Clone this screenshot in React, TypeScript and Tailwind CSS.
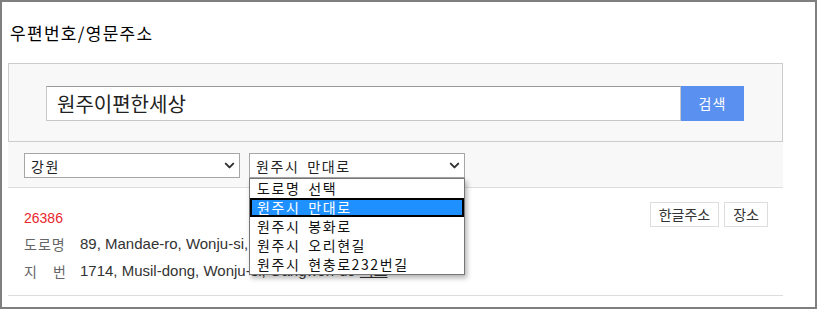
import { ChevronDown } from 'lucide-react';

const roads = ['도로명 선택', '원주시 만대로', '원주시 봉화로', '원주시 오리현길', '원주시 현충로232번길'];

const font = { fontFamily: '"Noto Sans CJK KR", "Liberation Sans", sans-serif' };
const latin = { fontFamily: '"Liberation Sans", "Noto Sans CJK KR", sans-serif' };

function FakeSelect({ value, width }: { value: string; width: string }) {
  return (
    <div className={`${width} h-[25px] border border-[#a6a6a6] bg-white flex items-center justify-between pl-[6px] pr-[2px] text-[14px] text-[#222]`}>
      <span className="leading-none tracking-[1.6px] [word-spacing:3px]">{value}</span>
      <ChevronDown size={15} strokeWidth={3.2} className="text-[#333]" />
    </div>
  );
}

export default function App() {
  return (
    <div
      className="relative w-[817px] h-[309px] border-2 border-[#7f7f7f] bg-white overflow-hidden"
      style={font}
    >
      <div className="ml-[6px] w-[775px]">
        <h1 className="pt-[20px] pl-[2px] h-[61px] text-[17px] leading-[22px] tracking-[1.3px] text-black">우편번호/영문주소</h1>

        <div className="h-[79px] border border-[#cccccc] bg-[#f8f8f8] pl-[37px] pt-[22px] flex items-start">
          <div className="w-[635px] h-[35px] bg-white border border-[#c8c8c8] border-t-[#999] flex items-center pl-[10px] text-[20px] text-[#222]">
            원주이편한세상
          </div>
          <button className="w-[63px] h-[35px] bg-[#5a91f0] text-white text-[14px] tracking-[1px]">검색</button>
        </div>

        <div className="h-[46px] bg-[#f8f8f8] border-b border-[#dddddd] pl-[16px] pt-[11px] flex gap-[9px]">
          <FakeSelect value="강원" width="w-[216px]" />
          <FakeSelect value="원주시 만대로" width="w-[216px]" />
        </div>

        <div className="h-[108px] border-b border-[#dddddd] pl-[16px] pr-[15px] pt-[14px]">
          <div className="flex items-start justify-between">
            <span className="mt-[8px] text-[14px] leading-[16px] text-[#e8262f]" style={latin}>26386</span>
            <div className="flex gap-[5px]">
              <button className="h-[25px] px-[8px] border border-[#dddddd] bg-white text-[14px] text-[#333]">한글주소</button>
              <button className="h-[25px] px-[8px] border border-[#dddddd] bg-white text-[14px] text-[#333]">장소</button>
            </div>
          </div>
          <div className="mt-[8px] flex flex-col gap-[9px] text-[14px] leading-[18px]">
            <div className="flex whitespace-nowrap">
              <span className="w-[56px] shrink-0 text-[#666] tracking-[1px]">도로명</span>
              <span className="text-[15px] text-[#333]" style={latin}>89, Mandae-ro, Wonju-si, Gangwon-do</span>
            </div>
            <div className="flex whitespace-nowrap">
              <span className="w-[56px] shrink-0 flex text-[#666]">
                <span>지</span>
                <span className="ml-[16px]">번</span>
              </span>
              <span className="text-[15px] text-[#333]" style={latin}>
                1714, Musil-dong, Wonju-si, Gangwon-do <span className="underline">지도</span>
              </span>
            </div>
          </div>
        </div>
      </div>

      <ul className="absolute left-[247px] top-[176px] w-[216px] border border-[#767676] bg-white shadow-[2px_3px_5px_rgba(0,0,0,0.3)] text-[14px] text-[#111] tracking-[1.6px] [word-spacing:3px]">
        {roads.map((r, i) => (
          <li
            key={r}
            className={
              i === 1
                ? 'h-[19px] leading-[15px] px-[5px] bg-[#1e90ff] text-white border-2 border-black'
                : 'h-[19px] leading-[19px] px-[7px]'
            }
          >
            {r}
          </li>
        ))}
      </ul>
    </div>
  );
}
